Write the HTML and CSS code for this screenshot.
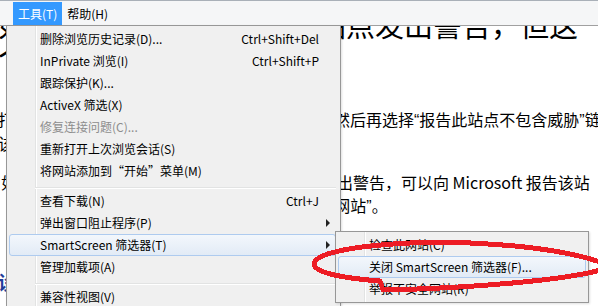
FILE: index.html
```html
<!DOCTYPE html>
<html lang="zh-CN">
<head>
    <meta charset="UTF-8">
    <meta name="viewport" content="width=device-width, initial-scale=1.0">
    <title>SmartScreen 筛选器</title>
    <link rel="stylesheet" href="styles.css">
</head>
<body>
    <!-- Seite hinter dem Menü -->
    <div class="article">
        <h1>
            <span class="line">如果筛选器未对一个危险站点发出警告，但这</span>
            <span class="line">个网站确实不安全</span>
        </h1>
        <p class="para1">
            <span class="line">打开被阻止的网站时请单击页面上的更多信息，然后再选择<span class="q">“</span>报告此站点不包含威胁<span class="q">”</span>链接。</span>
            <span class="line">该网站将会被重新审查。</span>
        </p>
        <p class="para2">
            <span class="line shift">如果你认为某个网站不安全但筛选器却未对其发出警告，可以向 Microsoft 报告该站</span>
            <span class="line shift-more">点，我们会在核实后将该站加入已知的<span class="q">“</span>不安全网站<span class="q">”</span>。</span>
        </p>
        <h2>设置 SmartScreen 筛选器</h2>
    </div>

    <div class="menubar">
        <span class="menubar-item active">工具(T)</span>
        <span class="menubar-item">帮助(H)</span>
    </div>

    <div class="menu tools-menu">
        <div class="item"><span class="label">删除浏览历史记录(D)...</span><span class="key">Ctrl+Shift+Del</span><span class="sub"></span></div>
        <div class="item"><span class="label">InPrivate 浏览(I)</span><span class="key">Ctrl+Shift+P</span><span class="sub"></span></div>
        <div class="item"><span class="label">跟踪保护(K)...</span><span class="sub"></span></div>
        <div class="item"><span class="label">ActiveX 筛选(X)</span><span class="sub"></span></div>
        <div class="item disabled"><span class="label">修复连接问题(C)...</span><span class="sub"></span></div>
        <div class="item"><span class="label">重新打开上次浏览会话(S)</span><span class="sub"></span></div>
        <div class="item"><span class="label">将网站添加到“开始”菜单(M)</span><span class="sub"></span></div>
        <div class="sep"></div>
        <div class="item"><span class="label">查看下载(N)</span><span class="key">Ctrl+J</span><span class="sub"></span></div>
        <div class="item"><span class="label">弹出窗口阻止程序(P)</span><span class="sub"><span class="arrow"></span></span></div>
        <div class="item hot"><span class="label">SmartScreen 筛选器(T)</span><span class="sub"><span class="arrow"></span></span></div>
        <div class="item"><span class="label">管理加载项(A)</span><span class="sub"></span></div>
        <div class="sep"></div>
        <div class="item"><span class="label">兼容性视图(V)</span><span class="sub"></span></div>
    </div>

    <div class="menu sub-menu">
        <div class="item"><span class="label">检查此网站(C)</span></div>
        <div class="item hot"><span class="label">关闭 SmartScreen 筛选器(F)...</span></div>
        <div class="item"><span class="label">举报不安全网站(R)</span></div>
    </div>

    <svg class="mark" width="598" height="306" viewBox="0 0 598 306">
        <path d="M 600 270 C 570 279, 480 288, 383 290 L 380 281 C 340 278, 314 272, 314 264 C 314 254, 350 246, 410 243 C 480 240, 560 248, 600 262"
              fill="none" stroke="#ed1c24" stroke-width="5" stroke-linejoin="round" shape-rendering="crispEdges"/>
    </svg>
</body>
</html>
```

FILE: styles.css
```css
* {
    box-sizing: border-box;
}
body {
    margin: 0;
    width: 598px;
    height: 306px;
    overflow: hidden;
    position: relative;
    background-color: white;
    color: black;
    font-family: "Noto Sans CJK SC", sans-serif;
}

/* Artikel im Hintergrund */
.article {
    margin-left: -2px;
    white-space: nowrap;
}
.article .line {
    display: block;
}
.q {
    font-family: "Liberation Sans", sans-serif;
}
h1 {
    margin: 0;
    padding-top: 8px;
    font-size: 29px;
    font-weight: normal;
    line-height: 32px;
}
.para1, .para2 {
    margin: 0;
    font-size: 16px;
    line-height: 23px;
}
.para1 {
    margin-top: 36px;
}
.para2 {
    margin-top: 16px;
}
.shift {
    padding-left: 3px;
}
.shift-more {
    padding-left: 11px;
}
h2 {
    margin: 52px 0 0;
    font-size: 19px;
    line-height: 24px;
    color: #1f3d99;
}

/* Menüleiste */
.menubar {
    position: absolute;
    top: 0;
    left: 0;
    right: 0;
    height: 26px;
    padding-left: 13px;
    display: flex;
    background-color: #f5f6f7;
    border-top: 1px solid #a9b0b8;
    border-bottom: 1px solid #a0a0a0;
    font-size: 12px;
}
.menubar-item {
    margin-top: 1px;
    padding: 0 5px;
    height: 23px;
    line-height: 23px;
}
.menubar-item.active {
    background-color: #3399ff;
    color: white;
}

/* Menüs */
.menu {
    position: absolute;
    border: 1px solid #979797;
    font-size: 12px;
    background: linear-gradient(to right, #f0f0f0 28px, #e2e3e3 28px, #e2e3e3 29px, white 29px, white 30px, #f0f0f0 30px);
    box-shadow: 1px 1px 2px rgba(0, 0, 0, 0.12);
}
.tools-menu {
    left: 6px;
    top: 25px;
    width: 335px;
    height: 290px;
    padding: 2px 4px 2px 2px;
}
.sub-menu {
    left: 335px;
    top: 231px;
    width: 254px;
    height: 72px;
    padding: 2px;
}
.item {
    height: 22px;
    display: flex;
    align-items: center;
    padding-left: 30px;
    border: 1px solid transparent;
    border-radius: 3px;
    line-height: 20px;
}
.item.hot {
    border-color: #aecbef;
    background: linear-gradient(#f3f7fc, #e2ebf6);
}
.item.disabled {
    color: #8d8d8d;
}
.key {
    margin-left: auto;
}
.sub {
    width: 16px;
    height: 20px;
    margin-left: auto;
    display: flex;
    align-items: center;
    justify-content: center;
    padding-left: 2px;
}
.key + .sub {
    margin-left: 0;
}
.arrow {
    width: 0;
    height: 0;
    border-top: 4px solid transparent;
    border-bottom: 4px solid transparent;
    border-left: 4px solid #222;
}
.sep {
    height: 1px;
    margin: 5px 0 1px 26px;
    background-color: #e2e3e3;
    border-bottom: 1px solid white;
    box-sizing: content-box;
}

/* rote Markierung */
.mark {
    position: absolute;
    top: 0;
    left: 0;
    pointer-events: none;
}
```
